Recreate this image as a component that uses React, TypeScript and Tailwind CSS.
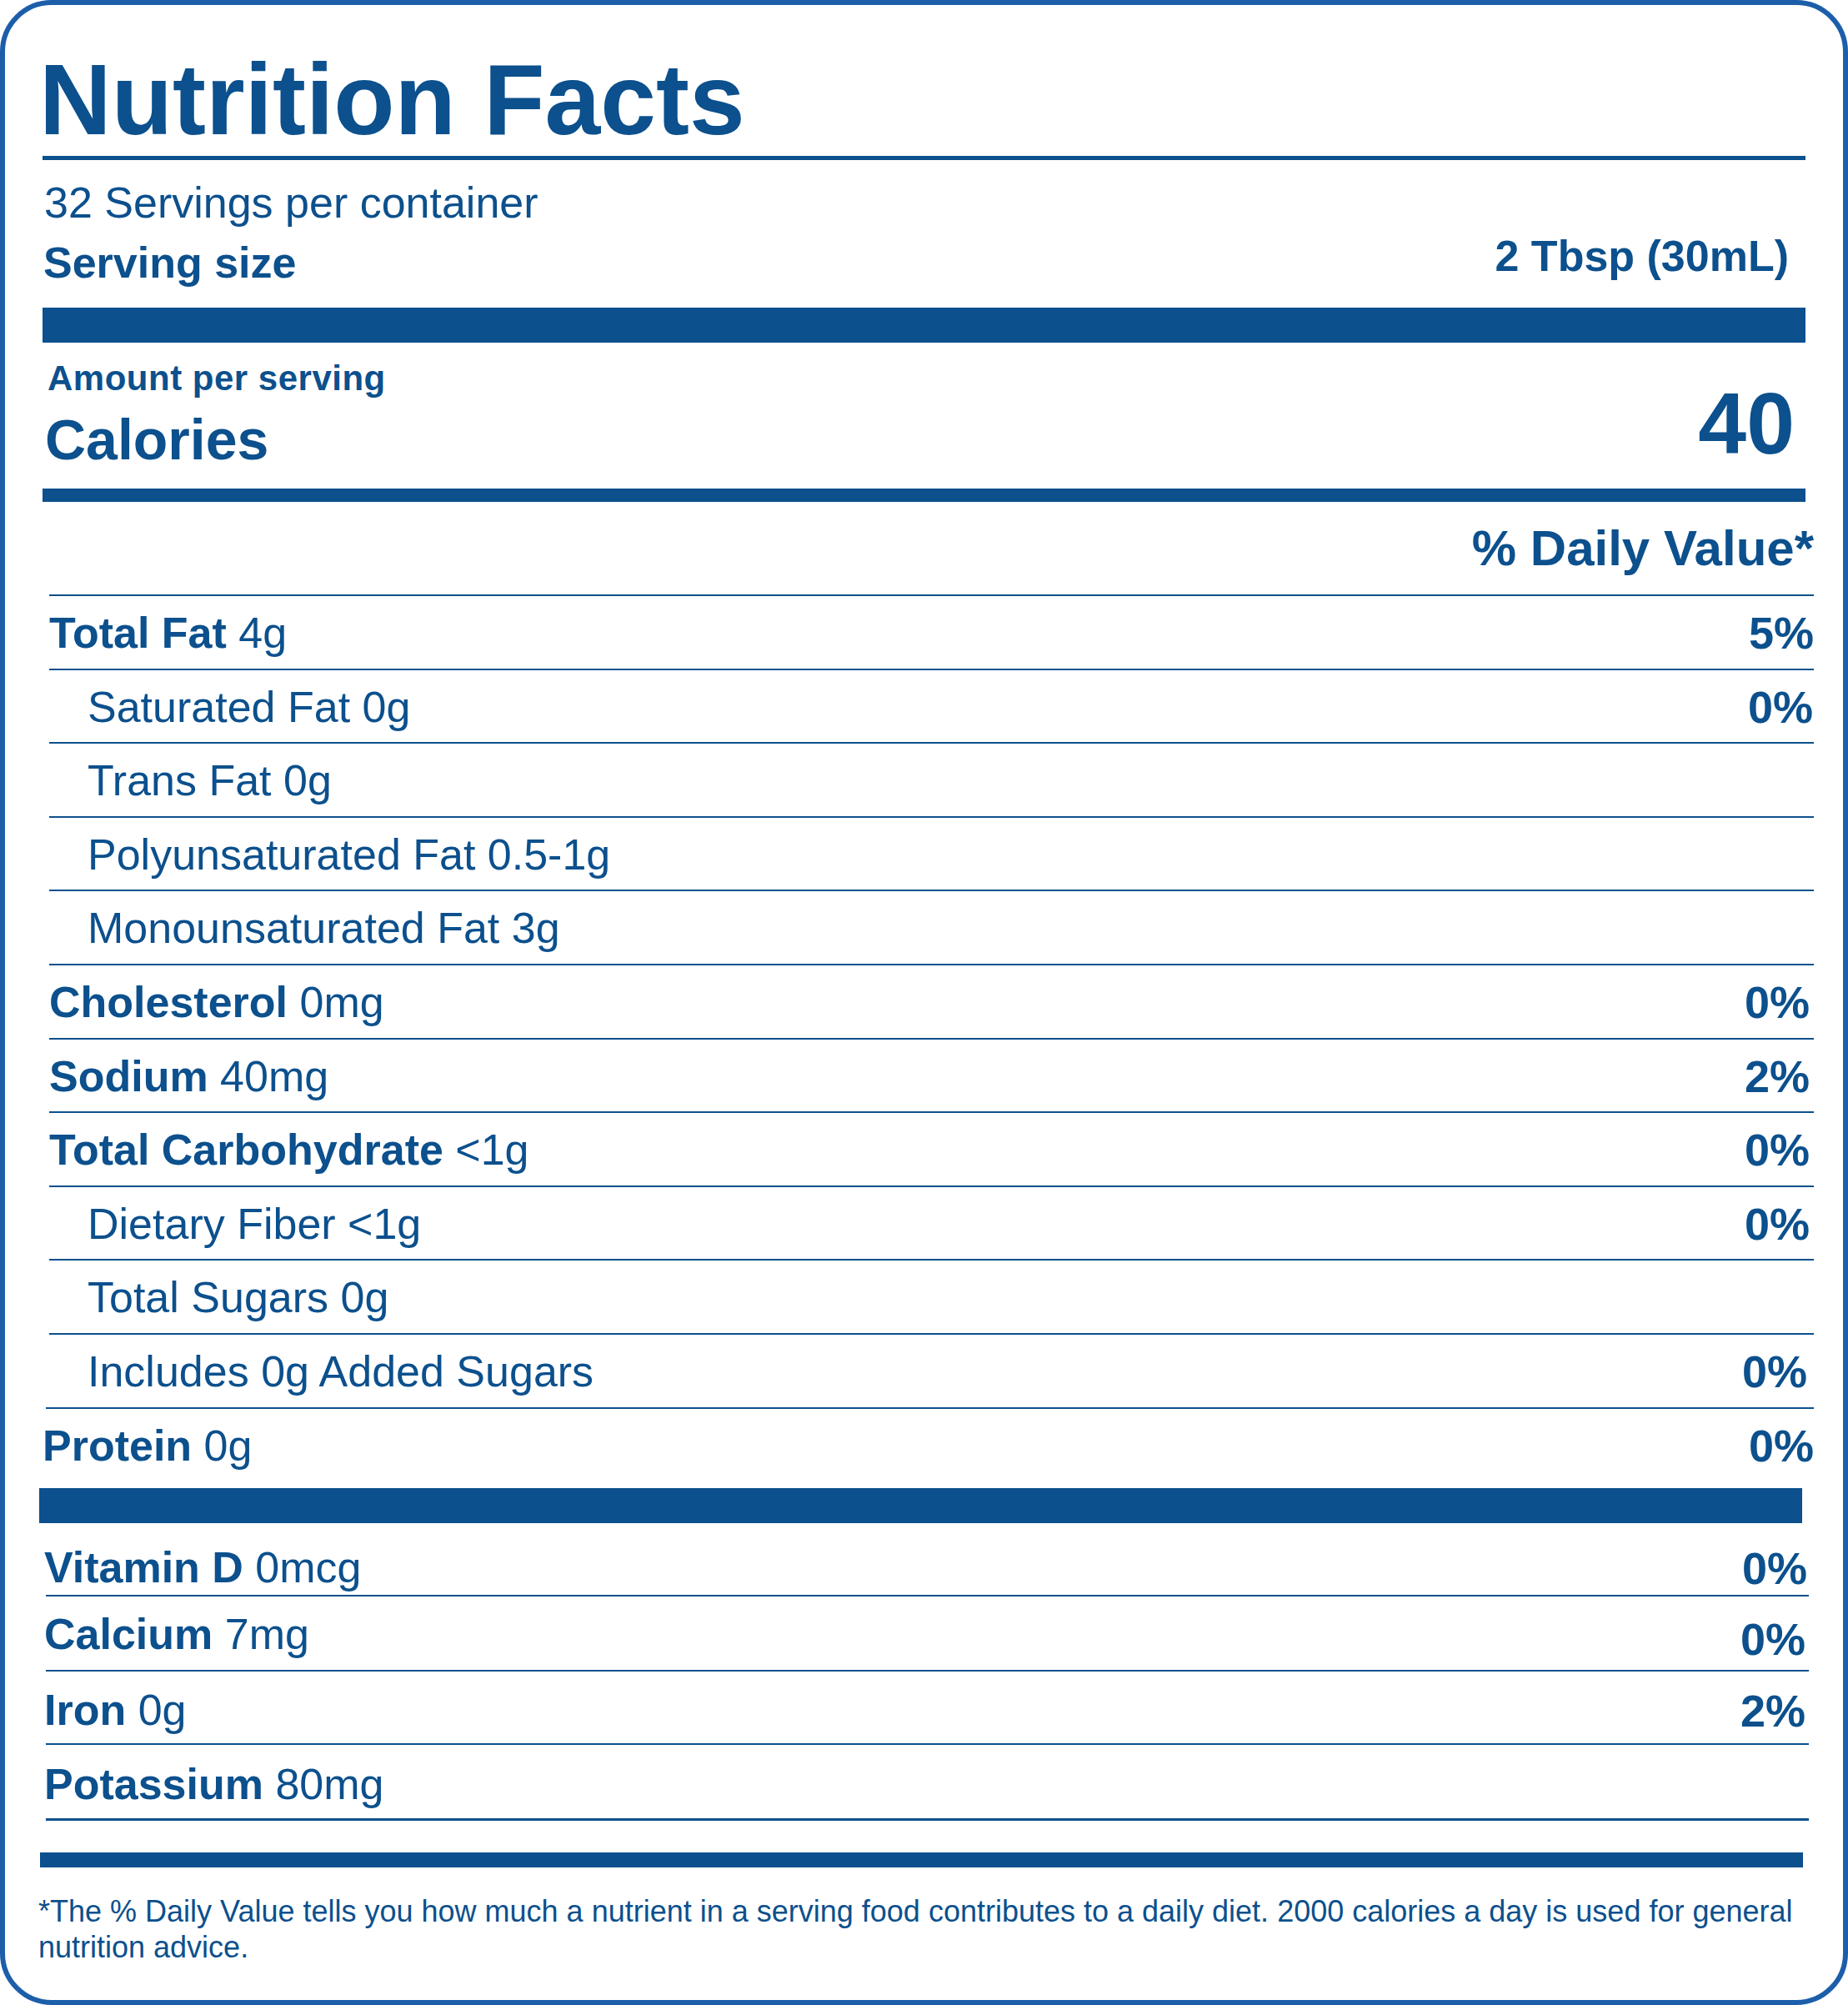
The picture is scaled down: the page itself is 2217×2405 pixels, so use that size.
import React from 'react';

type Row = {
  bold?: string;
  rest?: string;
  sub?: string;
  pct?: string;
  pr?: string;
};

// nutrient rows between "% Daily Value*" and Protein
const rows: Row[] = [
  { bold: 'Total Fat', rest: ' 4g', pct: '5%', pr: 'pr-0' },
  { sub: 'Saturated Fat 0g', pct: '0%', pr: 'pr-[1px]' },
  { sub: 'Trans Fat 0g' },
  { sub: 'Polyunsaturated Fat 0.5-1g' },
  { sub: 'Monounsaturated Fat 3g' },
  { bold: 'Cholesterol', rest: ' 0mg', pct: '0%', pr: 'pr-[5px]' },
  { bold: 'Sodium', rest: ' 40mg', pct: '2%', pr: 'pr-[5px]' },
  { bold: 'Total Carbohydrate', rest: ' <1g', pct: '0%', pr: 'pr-[5px]' },
  { sub: 'Dietary Fiber <1g', pct: '0%', pr: 'pr-[5px]' },
  { sub: 'Total Sugars 0g' },
  { sub: 'Includes 0g Added Sugars', pct: '0%', pr: 'pr-[8px]' },
];

// vitamins & minerals below the third bar
const minerals = [
  { bold: 'Vitamin D', rest: ' 0mcg', pct: '0%', cls: 'h-[88px] pt-[27px] border-b-2', pr: 'pr-[2px]' },
  { bold: 'Calcium', rest: ' 7mg', pct: '0%', cls: 'h-[90px] pt-[19px] border-b-2', pr: 'pr-[4px] mt-[5px]' },
  { bold: 'Iron', rest: ' 0g', pct: '2%', cls: 'h-[88px] pt-[20px] border-b-2', pr: 'pr-[4px]' },
  { bold: 'Potassium', rest: ' 80mg', pct: '', cls: 'h-[91px] pt-[21px] border-b-[3px]', pr: '' },
];

const Bar = ({ cls }: { cls: string }) => <div className={`bg-[#0c508d] ${cls}`} />;

const App = () => {
  return (
    <div className="w-[2217px] h-[2405px] bg-white text-[#0c508d] font-[family-name:Liberation_Sans,Arial,sans-serif]">
      <div className="h-full border-[6px] border-[#1c5eaa] rounded-[62px] px-[45px] flex flex-col">
        {/* Header */}
        <h1 className="mt-[53px] -ml-[4px] text-[120px] leading-none font-bold">Nutrition Facts</h1>
        <Bar cls="mt-[8px] h-[5px]" />
        <p className="mt-[25px] pl-[2px] text-[52px] leading-none">32 Servings per container</p>
        <div className="mt-[12px] flex justify-between items-start pr-[20px]">
          <span className="mt-[8px] pl-[1px] text-[52px] leading-none font-bold">Serving size</span>
          <span className="text-[52px] leading-none font-bold">2 Tbsp (30mL)</span>
        </div>
        <Bar cls="mt-[28px] h-[42px]" />

        {/* Calories */}
        <div className="mt-[22px] flex justify-between items-start">
          <div className="pl-[6px]">
            <p className="text-[42px] leading-none font-bold tracking-[0.5px]">Amount per serving</p>
            <p className="mt-[18px] -ml-[3px] text-[68px] leading-none font-bold">Calories</p>
          </div>
          <span className="mt-[23px] pr-[13px] text-[104px] leading-none font-bold">40</span>
        </div>
        <Bar cls="mt-[25px] h-[16px]" />

        {/* Nutrient rows */}
        <div className="ml-[8px] -mr-[10px]">
          <p className="mt-[26px] text-right text-[60px] leading-none font-bold">% Daily Value*</p>
          <div className="mt-[25px]">
            {rows.map((r, i) => (
              <div
                key={i}
                className="h-[88.6px] border-t-2 border-[#0c508d] pt-[18px] flex justify-between items-start text-[52px] leading-none"
              >
                {r.sub ? (
                  <span className="pl-[46px]">{r.sub}</span>
                ) : (
                  <span>
                    <b className="font-bold">{r.bold}</b>
                    {r.rest}
                  </span>
                )}
                {r.pct && <b className={`font-bold text-[54px] -mt-[1px] ${r.pr}`}>{r.pct}</b>}
              </div>
            ))}
            <div className="-ml-[4px] h-[97px] border-t-2 border-[#0c508d] pt-[18px] flex justify-between items-start text-[52px] leading-none">
              <span className="-ml-[4px]">
                <b className="font-bold">Protein</b> 0g
              </span>
              <b className="font-bold text-[54px] -mt-[1px]">0%</b>
            </div>
          </div>
        </div>

        <Bar cls="-ml-[4px] mr-[4px] h-[42px]" />

        {/* Vitamins & minerals */}
        <div className="ml-[4px] -mr-[4px]">
          {minerals.map((m) => (
            <div
              key={m.bold}
              className={`${m.cls} border-[#0c508d] flex justify-between items-start text-[52px] leading-none`}
            >
              <span className="-ml-[2px]">
                <b className="font-bold">{m.bold}</b>
                {m.rest}
              </span>
              {m.pct && <b className={`font-bold text-[54px] ${m.pr}`}>{m.pct}</b>}
            </div>
          ))}
        </div>

        <Bar cls="mt-[38px] -ml-[3px] mr-[3px] h-[18px]" />
        <p className="mt-[31px] -ml-[5px] text-[36px] leading-[43px]">
          *The % Daily Value tells you how much a nutrient in a serving food contributes to a daily diet. 2000 calories a
          day is used for general nutrition advice.
        </p>
      </div>
    </div>
  );
};

export default App;
